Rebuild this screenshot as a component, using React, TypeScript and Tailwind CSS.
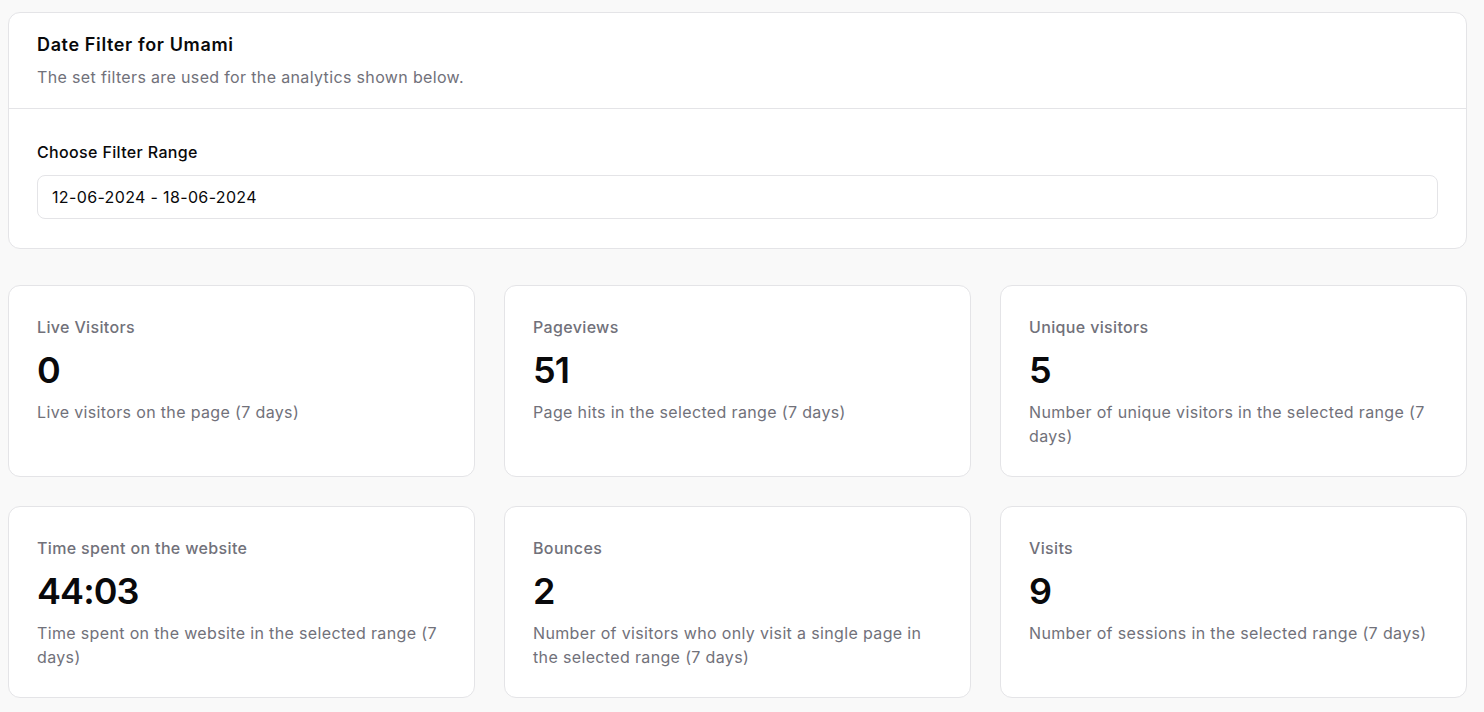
import React from "react";

const stats = [
  { title: "Live Visitors", value: "0", desc: "Live visitors on the page (7 days)" },
  { title: "Pageviews", value: "51", desc: "Page hits in the selected range (7 days)" },
  { title: "Unique visitors", value: "5", desc: "Number of unique visitors in the selected range (7 days)" },
  { title: "Time spent on the website", value: "44:03", desc: "Time spent on the website in the selected range (7 days)" },
  { title: "Bounces", value: "2", desc: "Number of visitors who only visit a single page in the selected range (7 days)" },
  { title: "Visits", value: "9", desc: "Number of sessions in the selected range (7 days)" },
];

export default function App() {
  return (
    <div className="min-h-screen bg-[#f9f9f9] pl-2 pr-[17px] pt-3 pb-3 font-['Inter',sans-serif] tracking-[0.022em] text-[#09090b]">
      <div className="rounded-xl border border-[#e4e4e7] bg-white">
        <div className="px-7 pt-[18px] pb-[19px] border-b border-[#e4e4e7]">
          <h2 className="text-lg font-semibold leading-7 tracking-[0.035em]">Date Filter for Umami</h2>
          <p className="mt-[6px] text-base leading-6 text-[#71717a]">The set filters are used for the analytics shown below.</p>
        </div>
        <div className="px-7 pt-[31px] pb-[29px]">
          <label className="block text-base font-medium leading-6">Choose Filter Range</label>
          <div className="mt-[11px] flex h-[44px] items-center rounded-lg border border-[#e4e4e7] bg-white px-[14px] text-base">
            12-06-2024 - 18-06-2024
          </div>
        </div>
      </div>
      <div className="mt-[36px] grid grid-cols-3 gap-x-[29px] gap-y-[29px]">
        {stats.map((s) => (
          <div key={s.title} className="h-[192px] rounded-xl border border-[#e4e4e7] bg-white px-7 pt-[29px]">
            <div className="text-base font-medium leading-6 text-[#71717a]">{s.title}</div>
            <div className="mt-[10px] text-4xl font-semibold leading-[42px] tracking-tight">{s.value}</div>
            <div className="mt-[9px] text-base leading-6 text-[#71717a]">{s.desc}</div>
          </div>
        ))}
      </div>
    </div>
  );
}
